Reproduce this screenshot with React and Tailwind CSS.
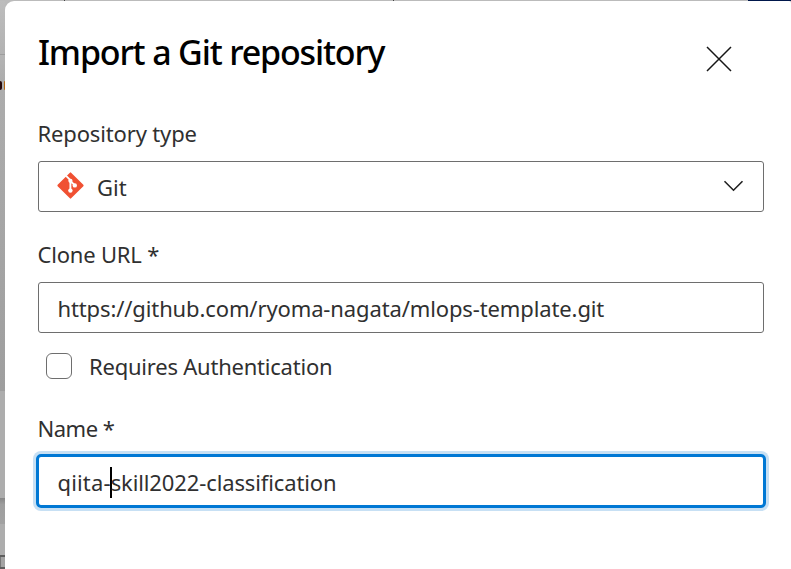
import React from "react";

function GitLogo() {
  return (
    <svg width="27" height="27" viewBox="0 0 27 27" className="relative -top-px shrink-0">
      <path d="M13.5 1.3 25.7 13.5 13.5 25.7 1.3 13.5Z" fill="#f05133" stroke="#f05133" strokeWidth="1.8" strokeLinejoin="round" />
      <path d="M8.6 3.4 13.4 8.2V19M13.4 8.8 17.6 13.2" fill="none" stroke="#fff" strokeWidth="1.9" />
      <circle cx="13.4" cy="8.8" r="2.1" fill="#fff" />
      <circle cx="13.4" cy="18.6" r="2.2" fill="#fff" />
      <circle cx="17.8" cy="13.4" r="2.2" fill="#fff" />
    </svg>
  );
}

function Backdrop() {
  return (
    <div className="flex w-[5px] shrink-0 flex-col overflow-hidden bg-[#a3a3a3]">
      <div className="h-[53px] bg-linear-to-b from-[#bdbdbd] to-[#b2b2b2]" />
      <div className="h-px bg-[#9d9d9d]" />
      <div className="h-[26px] bg-linear-to-b from-[#b4b4b4] to-[#adadad]" />
      <div className="flex h-[9px] justify-between bg-[#acacac]">
        <div className="w-[2px] rounded-r-full bg-[#26090b]" />
        <div className="w-px rounded-l-full bg-[#b36612]" />
      </div>
      <div className="h-[301px] bg-linear-to-b from-[#acacac] via-[#a5a5a5] to-[#9e9e9e]" />
      <div className="h-[107px] bg-[#adadad]" />
      <div className="h-[26px] bg-linear-to-b from-[#878787] via-[#9e9e9e] via-25% to-[#a2a2a2]" />
      <div className="h-[31px] bg-[#adadad]" />
      <div className="h-[2px] bg-[#5d5d5d]" />
      <div className="h-[10px] w-[1px] bg-[#777777]" />
      <div className="h-[2px] bg-[#5d5d5d]" />
    </div>
  );
}

export default function App() {
  return (
    <div className="flex h-[569px] w-[791px] flex-col overflow-hidden bg-[#bbb] font-['Noto_Sans','Open_Sans',sans-serif] text-[#303030]">
      <div className="flex h-px shrink-0">
        <div className="w-[64px]" />
        <div className="w-px bg-[#444]" />
        <div className="w-[328px]" />
        <div className="w-px bg-[#444]" />
        <div className="flex-1" />
        <div className="w-[43px] bg-[#00174b]" />
      </div>
      <div className="flex min-h-0 flex-1">
        <Backdrop />
        <main className="flex-1">
          <div className="h-full rounded-tl-[9px] rounded-tr-[2px] bg-white pr-[27px] pl-[33px]">
            <header className="flex h-[115px] justify-between pt-[27px]">
              <h1 className="h-[48px] text-[34px] leading-[48px] font-medium tracking-[-1.17px] whitespace-nowrap text-black">Import a Git repository</h1>
              <svg width="28" height="28" viewBox="0 0 28 28" className="mt-[17px] mr-[31px] shrink-0">
                <path d="m2 2 24 24M26 2 2 26" stroke="#161616" strokeWidth="1.5" fill="none" />
              </svg>
            </header>
            <label className="-ml-[0.5px] block h-[45px] text-[22px] leading-[34px] tracking-[-0.15px]">Repository type</label>
            <div className="flex h-[51px] items-center rounded-[3px] border border-[#6e6e6e] pr-[19px] pl-[18px]">
              <GitLogo />
              <span className="ml-[13px] flex-1 text-[22px] leading-[34px]">Git</span>
              <svg width="21" height="12" viewBox="0 0 21 12" className="relative -top-px">
                <path d="m1.5 1.2 9 9 9-9" stroke="#202020" strokeWidth="1.6" fill="none" />
              </svg>
            </div>
            <label className="mt-[25px] -ml-[0.5px] block h-[45px] text-[22px] leading-[34px] tracking-[-0.2px]">Clone URL *</label>
            <div className="flex h-[51px] items-center rounded-[3px] border border-[#6e6e6e] pt-[2px] pl-[18.5px] text-[22px] whitespace-nowrap">
              <span className="tracking-[-0.12px]">https://github.com/ryoma-nagata/mlops-template.git</span>
            </div>
            <div className="mt-[20px] ml-[8px] flex h-[26px] items-center">
              <span className="size-[26px] rounded-[6px] border border-[#6e6e6e]" />
              <span className="ml-[17px] text-[22px] tracking-[-0.22px]">Requires Authentication</span>
            </div>
            <label className="mt-[32px] -ml-[0.5px] block h-[43px] text-[22px] leading-[34px] tracking-[-0.5px]">Name *</label>
            <div className="-mx-[2px] flex h-[54px] items-center rounded-[5px] border-[3px] border-[#0078d4] pt-[2px] pl-[18.5px] text-[22px] whitespace-nowrap shadow-[0_0_0_3px_#c7e0f4]">
              <span className="tracking-[0.15px]">qiita-</span>
              <span className="-mx-px h-[31px] w-[2px] bg-black" />
              <span className="tracking-[-0.12px]">skill2022-classification</span>
            </div>
          </div>
        </main>
      </div>
    </div>
  );
}
